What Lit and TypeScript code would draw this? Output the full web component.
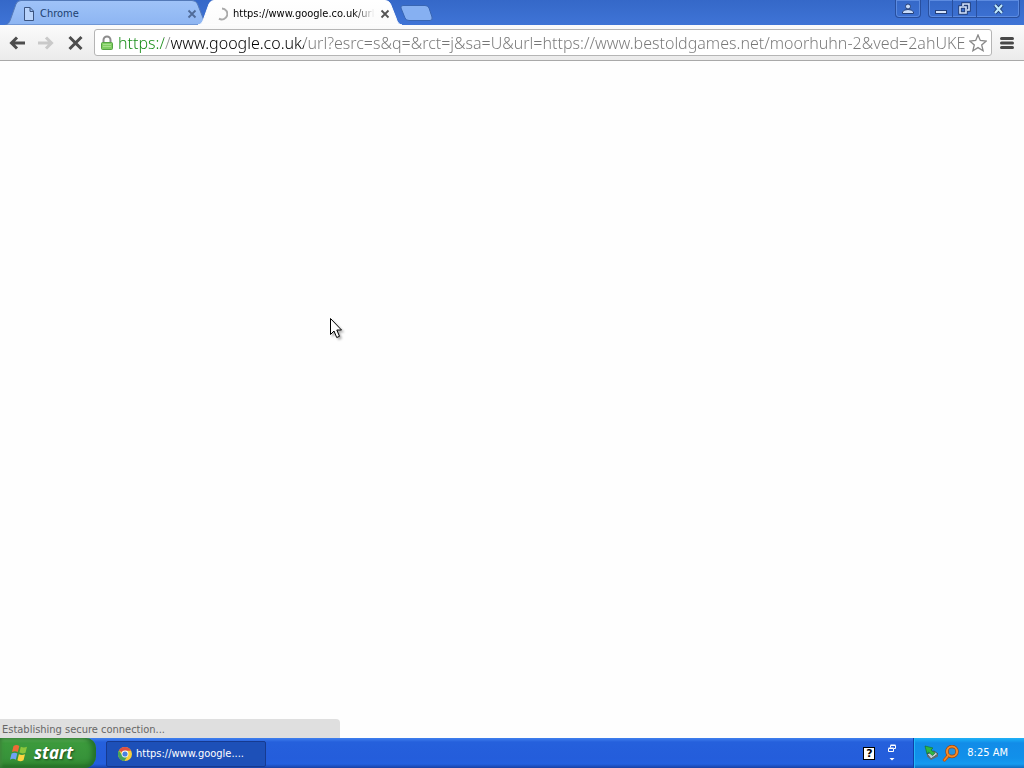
import { LitElement, html, css, svg } from "lit";
import { customElement, property } from "lit/decorators.js";

const closeGlyph = svg`<path d="M1.500 1.500L8.500 8.500M8.500 1.500L1.500 8.500" stroke="currentColor" stroke-width="1.800" fill="none"/>`;

@customElement("browser-tab")
class BrowserTab extends LitElement {
  @property() label = "";
  @property({ type: Boolean, reflect: true }) active = false;

  static styles = css`
    :host {
      display: grid;
      flex: 0 1 204px;
      min-width: 0;
      margin-right: -11px;
      height: 25px;
      color: #203f70;
    }
    :host([active]) {
      z-index: 1;
      color: #000;
    }
    .shape,
    .row {
      grid-area: 1 / 1;
    }
    .shape {
      width: 100%;
      height: 25px;
      z-index: 0;
    }
    .row {
      z-index: 1;
      display: flex;
      align-items: center;
      gap: 5px;
      min-width: 0;
      padding: 2px 12px 0 18px;
    }
    .label {
      flex: 1;
      min-width: 0;
      overflow: hidden;
      white-space: nowrap;
      font: 11px/16px "DejaVu Sans Condensed", "DejaVu Sans", sans-serif;
      font-stretch: condensed;
    }
    :host([active]) .label {
      mask-image: linear-gradient(to right, #000 calc(100% - 22px), transparent);
    }
    .close {
      display: flex;
      padding: 0;
      border: 0;
      background: none;
      color: #4f6b99;
    }
    :host([active]) .close {
      color: #555;
    }
  `;

  render() {
    return html`
      <svg class="shape" viewBox="0 0 204 25" preserveAspectRatio="none">
        <defs>
          <linearGradient id="f" x1="0" y1="0" x2="0" y2="1">
            <stop offset="0" stop-color=${this.active ? "#fff" : "#9fc3f8"} />
            <stop offset="1" stop-color=${this.active ? "#fbfbfb" : "#8db5f2"} />
          </linearGradient>
        </defs>
        <path
          d="M0 25C4 24 5 21 6 18L11 4Q12.500 .5 16 .5H187Q191 .5 192.500 4L198 18C199 21 200 24 204 25Z"
          fill="url(#f)"
          stroke=${this.active ? "#fff" : "#5379b8"}
        />
      </svg>
      <div class="row">
        ${this.active
          ? html`<svg width="12" height="14" viewBox="1 0 12 14">
              <path d="M7 1.500A5.500 5.500 0 1 1 4 11.700" fill="none" stroke="#aaa" stroke-width="2" />
            </svg>`
          : html`<svg width="12" height="14" viewBox="0 0 12 14">
              <path d="M1.500 .5H7L10.500 4V13.500H1.500Z M7 .5V4.500H10.500" fill="#b8d3fb" stroke="#3b5480" />
            </svg>`}
        <span class="label">${this.label}</span>
        <button class="close" aria-label="Close tab">
          <svg width="10" height="10" viewBox="0 0 10 10">${closeGlyph}</svg>
        </button>
      </div>
    `;
  }
}

@customElement("tool-bar")
class ToolBar extends LitElement {
  static styles = css`
    :host {
      display: flex;
      align-items: center;
      height: 35px;
      padding: 0 10px 0 8px;
      gap: 11px;
      background: linear-gradient(#fbfbfb, #ebebeb);
      border-bottom: 1px solid #a9a9a9;
      box-sizing: content-box;
    }
    button {
      display: flex;
      flex: none;
      padding: 0;
      border: 0;
      background: none;
    }
    .omnibox {
      flex: 1;
      min-width: 0;
      display: flex;
      align-items: center;
      box-sizing: border-box;
      height: 27px;
      margin: 0 -3px 0 -1px;
      padding: 0 4px 0 5px;
      border: 1px solid #b5b5b5;
      border-radius: 3px;
      background: #fff;
    }
    .lock {
      flex: none;
      margin-right: 4px;
    }
    .url {
      flex: 1;
      min-width: 0;
      height: 24px;
      padding: 0;
      border: 0;
      outline: 0;
      font: 300 16px/24px "Noto Sans", sans-serif;
      color: transparent;
      background: linear-gradient(
        to right,
        #128a12 46px,
        #888 46px 53px,
        #000 53px 186px,
        #777 186px
      );
      background-clip: text;
      -webkit-background-clip: text;
    }
  `;

  render() {
    return html`
      <button aria-label="Back">
        <svg width="18" height="16" viewBox="0 0 18 16">
          <path d="M17 8H4M9 2.500L3.500 8L9 13.500" fill="none" stroke="#4d4d4d" stroke-width="3" />
        </svg>
      </button>
      <button aria-label="Forward" disabled>
        <svg width="18" height="16" viewBox="0 0 18 16">
          <path d="M1 8H14M9 2.500L14.500 8L9 13.500" fill="none" stroke="#c9c9c9" stroke-width="3" />
        </svg>
      </button>
      <button aria-label="Stop">
        <svg width="18" height="16" viewBox="0 0 18 16">
          <path d="M3.500 2L15.500 14M15.500 2L3.500 14" fill="none" stroke="#4d4d4d" stroke-width="3" />
        </svg>
      </button>
      <div class="omnibox">
        <svg class="lock" width="14" height="16" viewBox="0 0 14 16">
          <path d="M3.500 8V5a3.500 3.500 0 0 1 7 0V8" fill="none" stroke="#8c8c8c" stroke-width="2" />
          <rect x="1.500" y="7.500" width="11" height="7" rx="1" fill="#80cd62" stroke="#55a344" />
          <path d="M3 9.500H11M3 11.500H11" stroke="#a4df8c" />
        </svg>
        <input
          class="url"
          aria-label="Address"
          spellcheck="false"
          value="https://www.google.co.uk/url?esrc=s&q=&rct=j&sa=U&url=https://www.bestoldgames.net/moorhuhn-2&ved=2ahUKE"
        />
        <button aria-label="Bookmark this page">
          <svg width="18" height="18" viewBox="0 0 18 18">
            <path
              d="M9 1L11.300 6.500L17.200 7L12.700 10.900L14.100 16.700L9 13.600L3.900 16.700L5.300 10.900L.8 7L6.700 6.500Z"
              fill="#fff"
              stroke="#888"
              stroke-width="1.300"
            />
          </svg>
        </button>
      </div>
      <button aria-label="Menu">
        <svg width="14" height="14" viewBox="0 0 14 14">
          <path d="M1.500 2.500H12.500M1.500 7H12.500M1.500 11.500H12.500" stroke="#484848" stroke-width="3" stroke-linecap="round" />
        </svg>
      </button>
    `;
  }
}

@customElement("task-bar")
class TaskBar extends LitElement {
  static styles = css`
    :host {
      display: flex;
      height: 30px;
      color: #fff;
      background: linear-gradient(#3c80ee 0, #3a78ea 1px, #2560dc 4px, #245ddb 20px, #2360df 26px, #1941a5);
      font: 11px/16px "DejaVu Sans Condensed", "DejaVu Sans", sans-serif;
      font-stretch: condensed;
    }
    button {
      font: inherit;
      color: inherit;
      border: 0;
      padding: 0;
      background: none;
    }
    .start {
      display: flex;
      align-items: center;
      gap: 4px;
      width: 96px;
      padding: 0 0 0 10px;
      border-radius: 0 10px 12px 0;
      background: linear-gradient(#5fb05f 0, #58aa54 1px, #3c9a3c 5px, #37933a 20px, #328a32 25px, #236b23);
      box-shadow: inset -4px 0 5px #24702a, inset 2px 0 3px #3f8a3c;
      font: italic bold 17px/24px "Open Sans", sans-serif;
      font-stretch: normal;
      text-shadow: 1px 1px 2px #1b481b;
    }
    .task {
      display: flex;
      align-items: center;
      gap: 4px;
      width: 160px;
      height: 26px;
      margin: 3px 0 0 10px;
      padding: 0 0 0 11px;
      box-sizing: border-box;
      border: 1px solid #163a90;
      border-radius: 2px;
      background: #1d50b8;
    }
    .bar {
      margin-left: auto;
      display: flex;
      align-items: center;
      gap: 12px;
      padding-right: 16px;
    }
    .help {
      width: 12px;
      height: 13px;
      background: #fff;
      border: 1px solid #000;
      box-sizing: border-box;
      color: #000;
      font: bold 11px/11px "DejaVu Sans", sans-serif;
    }
    .bar button {
      display: flex;
      justify-content: center;
    }
    .tray {
      display: flex;
      align-items: center;
      gap: 2px;
      padding: 0 16px 0 10px;
      border-left: 1px solid #0f3fa8;
      background: linear-gradient(#1fb0f5 0, #18a4f2 2px, #128ce8 5px, #1190ea 20px, #159bf0 26px, #0f6cc0);
      box-shadow: inset 1px 0 #22b8f8;
    }
    .clock {
      margin-left: 6px;
      white-space: nowrap;
    }
  `;

  render() {
    return html`
      <button class="start">
        <svg width="20" height="20" viewBox="0 0 20 20">
          <path d="M3.500 3Q6.500 1.200 9.300 3L7.800 9Q5 7.300 2 9Z" fill="#ef6a37" />
          <path d="M10.800 3.700Q13.800 5.300 17 3.700L15.500 9.700Q12.500 11.200 9.400 9.600Z" fill="#8cc63c" />
          <path d="M1.600 10.600Q4.500 9 7.300 10.600L5.800 16.700Q3 15 0 16.700Z" fill="#6fa2f5" />
          <path d="M8.900 11.300Q12 12.800 15 11.300L13.500 17.300Q10.500 19 7.400 17.300Z" fill="#fdd440" />
        </svg>
        start
      </button>
      <button class="task">
        <svg width="14" height="14" viewBox="0 0 14 14">
          <circle cx="7" cy="7" r="7" fill="#f7cf3c" />
          <path d="M7 7L.9 3.500A7 7 0 0 1 13.100 3.800H7Z" fill="#df5043" />
          <path d="M.9 3.500A7 7 0 0 0 6.500 14L9.500 8.800L4 8Z" fill="#46a35b" />
          <circle cx="7" cy="7" r="3.400" fill="#fff" />
          <circle cx="7" cy="7" r="2.600" fill="#4a80df" />
        </svg>
        https://www.google....
      </button>
      <div class="bar">
        <button class="help" aria-label="Help">?</button>
        <button aria-label="Language bar options">
          <svg width="10" height="18" viewBox="0 0 10 18">
            <path d="M3.500 3.500V1.500H8.500V4.500H7M1.500 4.500H6.500V7.500H1.500ZM1.500 4H6.500M3.500 1H8.500" fill="none" stroke="#fff" />
            <path d="M2.500 14H7.500L5 16.500Z" fill="#fff" />
          </svg>
        </button>
      </div>
      <div class="tray">
        <svg width="16" height="16" viewBox="0 0 16 16">
          <path d="M3 9L10 6L14 9L7 14Z" fill="#c4ccd0" stroke="#41504f" />
          <path d="M3 9V11.500L7 15L14 11.500V9L7 13.500Z" fill="#5e6c74" />
          <path d="M1 1L9 3L7 5L11 8L8.500 10.500L4.500 7L3 9Z" fill="#2eb842" stroke="#197335" stroke-width=".7" />
        </svg>
        <svg width="17" height="17" viewBox="0 0 17 17">
          <path d="M6.800 9.800L2.500 15" stroke="#bd5410" stroke-width="3.400" stroke-linecap="round" />
          <circle cx="10" cy="6.500" r="5" fill="#2693de" stroke="#974310" stroke-width="3.400" />
          <circle cx="10" cy="6.500" r="5" fill="none" stroke="#f58a25" stroke-width="2.200" />
          <path d="M6.800 9.800L2.500 15" stroke="#f58a25" stroke-width="1.600" stroke-linecap="round" />
        </svg>
        <span class="clock">8:25 AM</span>
      </div>
    `;
  }
}

@customElement("app-root")
class AppRoot extends LitElement {
  static styles = css`
    :host {
      display: flex;
      flex-direction: column;
      height: 100vh;
      overflow: hidden;
      background: #fefefe;
    }
    .titlebar {
      display: flex;
      align-items: flex-start;
      height: 25px;
      padding: 0 4px 0 5px;
      background: linear-gradient(#3568c8, #3f74d6);
    }
    .tabs {
      display: flex;
      align-items: flex-start;
      flex: 1;
      min-width: 0;
    }
    button {
      display: flex;
      align-items: center;
      justify-content: center;
      padding: 0;
      border: 0;
      background: none;
    }
    .newtab {
      flex: none;
      margin: 5px 0 0 9px;
    }
    .controls {
      display: flex;
      margin-left: 7px;
      border: 1px solid #284f9e;
      border-top: 0;
      border-radius: 0 0 4px 4px;
      box-shadow: inset 0 0 0 1px #5c8be0;
    }
    .controls button {
      width: 24px;
      height: 17px;
      border-right: 1px solid #284f9e;
      box-sizing: border-box;
    }
    .controls .close {
      width: 42px;
    }
    .controls button:last-child {
      border-right: 0;
    }
    .page {
      flex: 1;
      display: flex;
      flex-direction: column;
      justify-content: flex-end;
      align-items: flex-start;
    }
    .status {
      box-sizing: border-box;
      width: 340px;
      max-width: 100%;
      padding: 3px 2px 0;
      border-radius: 0 4px 0 0;
      background: #dfdfdf;
      color: #666;
      font: 11px/16px "DejaVu Sans Condensed", "DejaVu Sans", sans-serif;
      font-stretch: condensed;
    }
    .pointer {
      position: absolute;
      left: 329px;
      top: 317px;
      filter: drop-shadow(2px 2px 1px rgba(0, 0, 0, 0.3));
    }
  `;

  render() {
    return html`
      <header class="titlebar">
        <div class="tabs">
          <browser-tab label="Chrome"></browser-tab>
          <browser-tab label="https://www.google.co.uk/url" active></browser-tab>
          <button class="newtab" aria-label="New tab">
            <svg width="34" height="16" viewBox="0 0 34 16">
              <path d="M3 .5H25Q28 .5 29 3L32 12Q33 15.500 30 15.500H9Q6 15.500 5 13L1 3Q.3 .5 3 .5Z" fill="#86b0f2" stroke="#3865b2" />
            </svg>
          </button>
        </div>
        <div class="controls">
          <button aria-label="Profile">
            <svg width="12" height="14" viewBox="0 0 12 14">
              <circle cx="6" cy="4.500" r="2.500" fill="#c8dcfa" stroke="#243f77" />
              <path d="M.5 11.500V10Q1.500 7.500 6 7.500T11.500 10V11.500Z" fill="#c8dcfa" stroke="#243f77" />
            </svg>
          </button>
        </div>
        <div class="controls">
          <button aria-label="Minimize">
            <svg width="12" height="12" viewBox="0 0 12 12">
              <rect x=".5" y="7.500" width="11" height="3" fill="#d4e4fc" stroke="#243f77" />
            </svg>
          </button>
          <button aria-label="Restore">
            <svg width="13" height="13" viewBox="0 0 13 13">
              <path d="M5 2H11V8H9V4H5Z M2 5H8V11H2Z" fill="none" stroke="#243f77" stroke-width="3.500" />
              <path d="M5 4V2H11V8H9M2 5H8V11H2Z" fill="none" stroke="#d4e4fc" stroke-width="1.600" />
            </svg>
          </button>
          <button class="close" aria-label="Close">
            <svg width="13" height="12" viewBox="0 0 13 12">
              <path d="M3 2L10 10M10 2L3 10" stroke="#243f77" stroke-width="4" />
              <path d="M3 2L10 10M10 2L3 10" stroke="#bfeaff" stroke-width="2" />
            </svg>
          </button>
        </div>
      </header>
      <tool-bar></tool-bar>
      <main class="page">
        <div class="status" role="status">Establishing secure connection...</div>
      </main>
      <task-bar></task-bar>
      <svg class="pointer" width="14" height="22" viewBox="0 0 14 22">
        <path
          d="M1.500 1.500V17.500L5 14L7.700 20.500L10.500 19.300L7.800 13H12.500Z"
          fill="#fff"
          stroke="#000"
        />
      </svg>
    `;
  }
}
